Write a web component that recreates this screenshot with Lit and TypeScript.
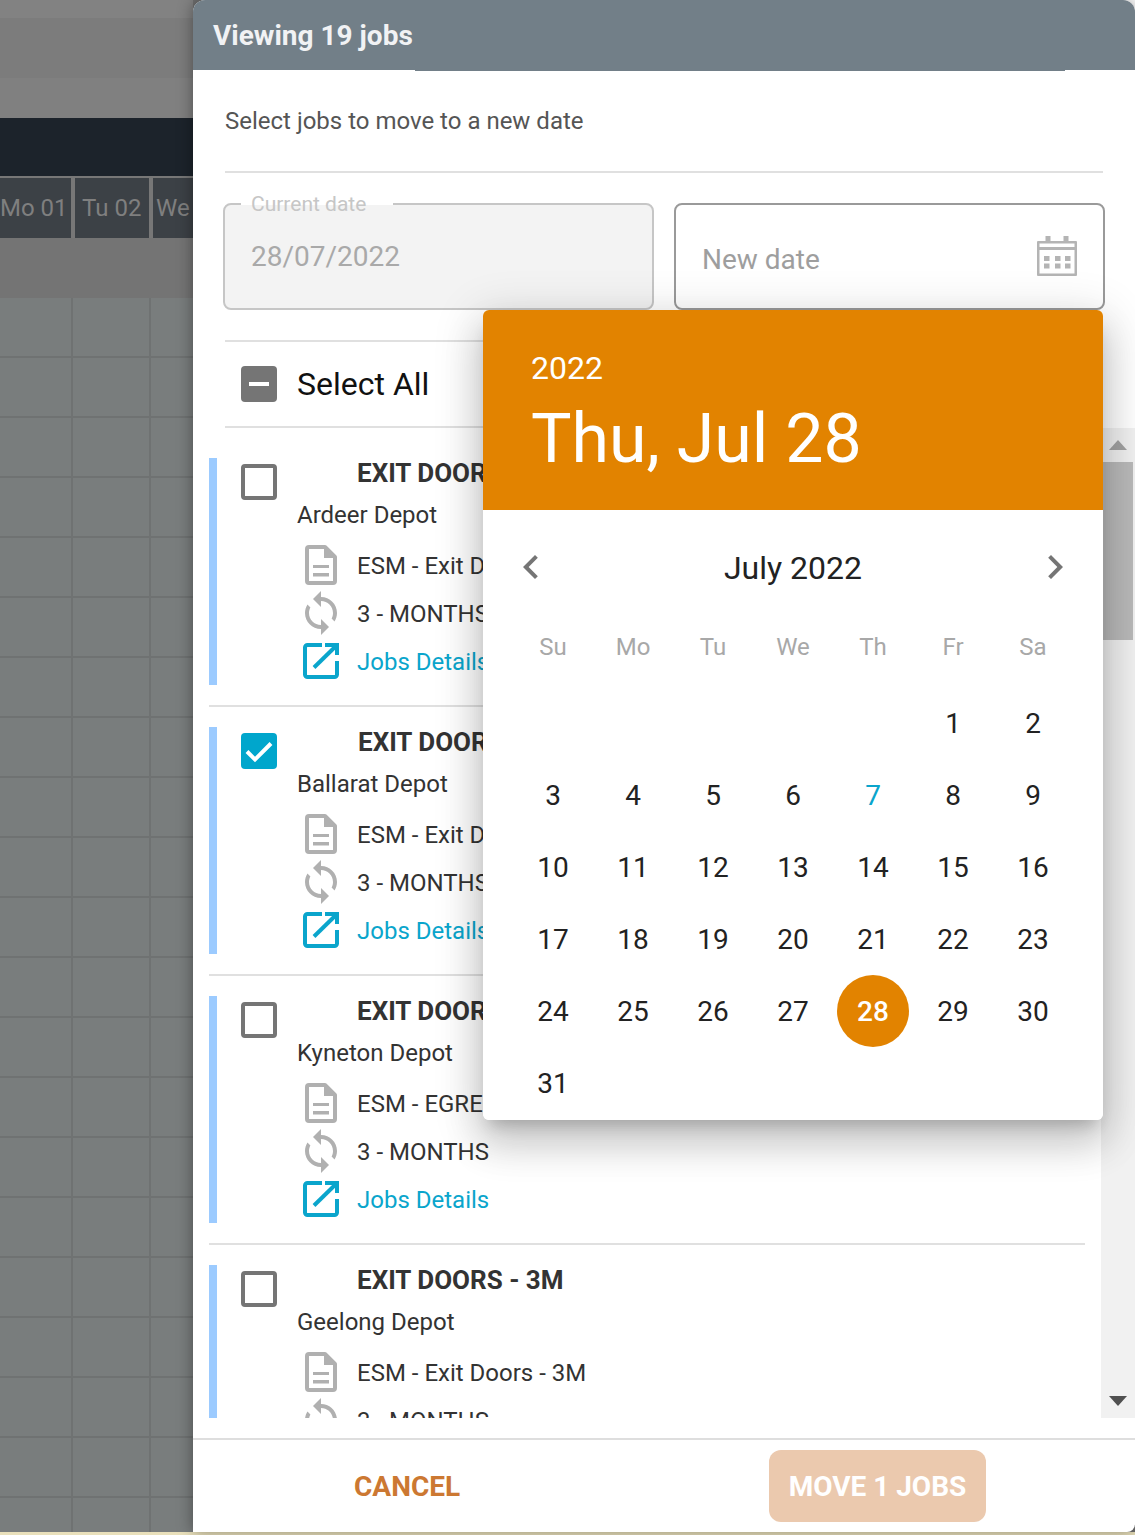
import { LitElement, html, css, svg } from "lit";
import { customElement } from "lit/decorators.js";

const docIcon = html`<svg class="doc" width="32" height="40" viewBox="0 0 32 40">
  <path d="M4 2h16l10 10v24a2 2 0 0 1-2 2H4a2 2 0 0 1-2-2V4a2 2 0 0 1 2-2z" fill="none" stroke="#b0b0b0" stroke-width="4" stroke-linejoin="round"/>
  <path d="M19 1l12 12H19z" fill="#b0b0b0"/>
  <rect x="8" y="20" width="16" height="3" fill="#b0b0b0"/><rect x="8" y="28" width="16" height="3.5" fill="#b0b0b0"/>
</svg>`;
const syncIcon = html`<svg width="32" height="44" viewBox="4 1 16 22"><path fill="#b0b0b0" d="M12 4V1L8 5l4 4V6c3.31 0 6 2.69 6 6 0 1.01-.25 1.97-.7 2.8l1.46 1.46C19.54 15.03 20 13.57 20 12c0-4.42-3.58-8-8-8zm0 14c-3.31 0-6-2.69-6-6 0-1.01.25-1.97.7-2.8L5.24 7.74C4.46 8.97 4 10.43 4 12c0 4.42 3.58 8 8 8v3l4-4-4-4v3z"/></svg>`;
const openIcon = html`<svg width="36" height="36" viewBox="0 0 36 36" fill="none" stroke="#0aa5cc" stroke-width="4">
  <path d="M19 2H4.500a2.500 2.500 0 0 0-2.500 2.500v27a2.500 2.500 0 0 0 2.500 2.500h27a2.500 2.500 0 0 0 2.500-2.500V18"/>
  <path d="M11 24.500L33 3"/><path d="M22 2h12v10"/>
</svg>`;
const calendarIcon = html`<svg width="40" height="40" viewBox="0 0 40 40" fill="#b4b4b4">
  <path fill-rule="evenodd" d="M1 5h7.500V0h5v5h13V0h5v5H39a1 1 0 0 1 1 1v33a1 1 0 0 1-1 1H1a1 1 0 0 1-1-1V6a1 1 0 0 1 1-1zm1.500 2.500V11h35V7.500zm0 6.500V37.500h35V14z"/>
  ${[7, 18, 28].map((x) => [20, 27.5].map((y) => svg`<rect x=${x} y=${y} width="5.500" height="5"/>`))}
</svg>`;
const chevronLeft = html`<svg width="48" height="48" viewBox="0 0 24 24"><path fill="#757575" d="M15.41 7.41L14 6l-6 6 6 6 1.41-1.41L10.830 12z"/></svg>`;
const chevronRight = html`<svg width="48" height="48" viewBox="0 0 24 24"><path fill="#757575" d="M8.590 16.590L10 18l6-6-6-6-1.41 1.41L13.170 12z"/></svg>`;

const jobs = [
  { depot: "Ardeer Depot", name: "ESM - Exit Doors - 3M", checked: false },
  { depot: "Ballarat Depot", name: "ESM - Exit Doors - 3M", checked: true },
  { depot: "Kyneton Depot", name: "ESM - EGRESS - 3M", checked: false },
  { depot: "Geelong Depot", name: "ESM - Exit Doors - 3M", checked: false },
];
const days: (number | null)[] = [null, null, null, null, null];
for (let d = 1; d <= 31; d++) days.push(d);

@customElement("app-root")
export class AppRoot extends LitElement {
  static styles = css`
    :host { display: block; height: 1535px; overflow: hidden; font-family: Roboto, "Liberation Sans", sans-serif; background: #e9e0bb; }
    * { box-sizing: border-box; }
    .page { display: flex; height: 1532px; background: linear-gradient(#fff, #fff) top right / 20px 20px no-repeat, #6f6f6f; }

    .bg { width: 193px; flex: none; display: flex; flex-direction: column; overflow: hidden; background: #808080; }
    .b1 { height: 18px; background: #828282; }
    .b2 { height: 60px; background: #7c7c7c; }
    .b3 { height: 40px; background: #808080; }
    .b4 { height: 58px; background: #1c232b; }
    .cells { height: 62px; display: flex; gap: 4px; padding-top: 2px; background: #777; flex: none; }
    .cell { height: 60px; background: #3c4146; color: #7f7f7f; font-size: 24px; line-height: 60px; white-space: nowrap; overflow: hidden; flex: none; }
    .cell.a { width: 71px; }
    .cell.b { width: 74px; padding-left: 7px; }
    .cell.c { width: 40px; padding-left: 3px; }
    .b5 { height: 60px; background: #747474; flex: none; }
    .grid { flex: 1; background-color: #797d7d;
      background-image: linear-gradient(#6f7272 2px, transparent 2px), linear-gradient(90deg, transparent 71px, #6f7272 71px, #6f7272 73px, transparent 73px, transparent 149px, #6f7272 149px, #6f7272 151px, transparent 151px);
      background-size: 100% 60px, 100% 100%; background-position: 0 58px, 0 0; }

    .dialog { width: 942px; flex: none; height: 1532px; background: #fff; border-radius: 12px 12px 8px 0; position: relative; z-index: 1; display: flex; flex-direction: column; box-shadow: 0 0 16px rgba(0, 0, 0, .4); }
    .head { height: 70px; flex: none; background: #727f88; color: #f1f2f4; font-size: 28px; font-weight: 700; line-height: 71px; padding-left: 20px; border-radius: 12px 12px 0 0; position: relative; }
    .head::after { content: ""; position: absolute; left: 222px; width: 650px; bottom: -1px; height: 1px; background: #727f88; }
    .top { padding: 0 32px; flex: none; }
    .sub { height: 103px; border-bottom: 2px solid #e0e0e0; font-size: 24px; line-height: 102px; color: #555; }
    .fields { display: flex; gap: 20px; margin: 30px -2px 30px -2px; }
    .field { height: 107px; border-radius: 8px; border: 2px solid #9a9a9a; position: relative; font-size: 28px; }
    .field.cur { width: 431px; padding-left: 26px; background: #f3f3f3; border-color: #c6c6c6; color: #a9a9a9; line-height: 104px; }
    .field.new { width: 431px; padding-left: 26px; color: #9e9e9e; line-height: 110px; display: flex; justify-content: space-between; }
    .legend { position: absolute; left: 16px; top: -13px; padding: 0 27px 0 10px; height: 24px; line-height: 24px; font-size: 21px; color: #c6c6c6; background: linear-gradient(#fff 13px, #f3f3f3 13px); }
    .cal { margin: 31px 26px 0 0; height: 40px; display: block; }
    .cal svg { display: block; }
    .selall { height: 88px; border-top: 2px solid #e0e0e0; border-bottom: 2px solid #e0e0e0; display: flex; align-items: center; gap: 20px; padding-left: 16px; font-size: 32px; color: #111; }
    .box { width: 36px; height: 36px; border-radius: 4px; flex: none; display: flex; align-items: center; justify-content: center; margin-top: 6px; }
    .selall .box { margin-top: 0; }
    .box.minus { background: #757575; }
    .box.minus i { width: 20px; height: 4px; background: #fff; display: block; }
    .box.off { border: 4px solid #757575; background: #fff; }
    .box.on { background: #00a6cc; }

    .listwrap { height: 990px; flex: none; display: flex; overflow: hidden; }
    .list { flex: 1; padding: 30px 16px 0 16px; overflow: hidden; }
    .job { height: 227px; display: flex; border-left: 8px solid #9ccbff; padding-left: 24px; gap: 20px; margin-bottom: 20px; }
    .rule { height: 2px; background: #e0e0e0; margin-bottom: 20px; }
    .info { flex: 1; color: #333; }
    .title { font-size: 26px; font-weight: 700; height: 30px; line-height: 30px; padding-left: 60px; color: #333; white-space: nowrap; }
    .job.checked .title { padding-left: 61px; }
    .depot { height: 54px; font-size: 24px; line-height: 54px; white-space: nowrap; }
    .row { height: 48px; display: flex; align-items: center; gap: 12px; font-size: 24px; white-space: nowrap; }
    .ic { width: 48px; height: 48px; padding-bottom: 2px; display: flex; align-items: center; justify-content: center; flex: none; }
    .link { color: #0aa5cc; }

    .bar { width: 34px; flex: none; background: #f1f1f1; position: relative; }
    .arrow { height: 34px; display: flex; align-items: center; justify-content: center; }
    .thumb { width: 32px; height: 178px; background: #bababa; }
    .down { position: absolute; left: 0; right: 0; bottom: 0; }

    .foot { flex: 1; margin-top: 20px; border-top: 2px solid #dedede; display: flex; justify-content: space-between; align-items: center; padding: 0 149px 0 161px; }
    .cancel { font-size: 28px; font-weight: 700; color: #cc7832; }
    .move { width: 217px; height: 72px; border-radius: 12px; background: #ebc9ae; color: #fff; font-size: 28px; font-weight: 700; display: flex; align-items: center; justify-content: center; }

    .picker { position: absolute; left: 290px; top: 310px; width: 620px; height: 810px; background: #fff; border-radius: 6px; overflow: hidden; }
    .shadow { position: absolute; left: 290px; top: 310px; width: 620px; height: 810px; border-radius: 6px; box-shadow: 0 11px 15px -7px rgba(0,0,0,.2), 0 24px 38px 3px rgba(0,0,0,.14), 0 9px 46px 8px rgba(0,0,0,.12); }
    .phead { height: 200px; background: #e28300; color: #fff; padding: 38px 48px 0; }
    .year { font-size: 32px; line-height: 40px; }
    .date { font-size: 68px; line-height: 84px; margin-top: 9px; white-space: nowrap; }
    .nav { margin-top: 33px; padding: 0 24px; height: 48px; display: flex; align-items: center; justify-content: space-between; font-size: 32px; color: #222; }
    .nav svg { display: block; }
    .nav span { padding-top: 2px; }
    .wk, .days { display: grid; grid-template-columns: repeat(7, 80px); padding: 0 30px; }
    .wk { margin-top: 40px; height: 32px; line-height: 32px; font-size: 24px; color: #a8a8a8; text-align: center; }
    .days { margin-top: 24px; grid-auto-rows: 72px; }
    .d { width: 72px; height: 72px; margin: 0 4px; border-radius: 50%; font-size: 28px; color: #222; display: flex; align-items: center; justify-content: center; }
    .d.today { color: #0aa5cc; }
    .d.sel { background: #e28300; color: #fff; font-weight: 500; }
  `;

  render() {
    return html`
      <div class="page">
        <div class="bg">
          <div class="b1"></div><div class="b2"></div><div class="b3"></div><div class="b4"></div>
          <div class="cells">
            <div class="cell a">Mo 01</div><div class="cell b">Tu 02</div><div class="cell c">We 03</div>
          </div>
          <div class="b5"></div>
          <div class="grid"></div>
        </div>
        <div class="dialog">
          <div class="head">Viewing 19 jobs</div>
          <div class="top">
            <div class="sub">Select jobs to move to a new date</div>
            <div class="fields">
              <div class="field cur"><span class="legend">Current date</span>28/07/2022</div>
              <div class="field new"><span>New date</span><span class="cal">${calendarIcon}</span></div>
            </div>
            <div class="selall"><span class="box minus"><i></i></span>Select All</div>
          </div>
          <div class="listwrap">
            <div class="list">
              ${jobs.map((j, i) => html`
                <div class="job ${j.checked ? "checked" : ""}">
                  <span class="box ${j.checked ? "on" : "off"}">
                    ${j.checked ? html`<svg width="36" height="36" viewBox="0 0 36 36"><path d="M6 18.500l8 8L30 10.500" fill="none" stroke="#fff" stroke-width="4"/></svg>` : ""}
                  </span>
                  <div class="info">
                    <div class="title">EXIT DOORS - 3M</div>
                    <div class="depot">${j.depot}</div>
                    <div class="row"><span class="ic">${docIcon}</span>${j.name}</div>
                    <div class="row"><span class="ic">${syncIcon}</span>3 - MONTHS</div>
                    <div class="row link"><span class="ic">${openIcon}</span>Jobs Details</div>
                  </div>
                </div>
                ${i < jobs.length - 1 ? html`<div class="rule"></div>` : ""}
              `)}
            </div>
            <div class="bar">
              <div class="arrow"><svg width="18" height="10" viewBox="0 0 18 10"><path d="M9 0l9 10H0z" fill="#a3a3a3"/></svg></div>
              <div class="thumb"></div>
              <div class="arrow down"><svg width="18" height="10" viewBox="0 0 18 10"><path d="M0 0h18l-9 10z" fill="#505050"/></svg></div>
            </div>
          </div>
          <div class="foot">
            <span class="cancel">CANCEL</span>
            <span class="move">MOVE 1 JOBS</span>
          </div>
          <div class="shadow"></div>
          <div class="picker">
            <div class="phead">
              <div class="year">2022</div>
              <div class="date">Thu, Jul 28</div>
            </div>
            <div class="nav">${chevronLeft}<span>July 2022</span>${chevronRight}</div>
            <div class="wk">${["Su", "Mo", "Tu", "We", "Th", "Fr", "Sa"].map((w) => html`<span>${w}</span>`)}</div>
            <div class="days">
              ${days.map((d) => html`<span class="d ${d === 7 ? "today" : ""} ${d === 28 ? "sel" : ""}">${d ?? ""}</span>`)}
            </div>
          </div>
        </div>
      </div>
    `;
  }
}
